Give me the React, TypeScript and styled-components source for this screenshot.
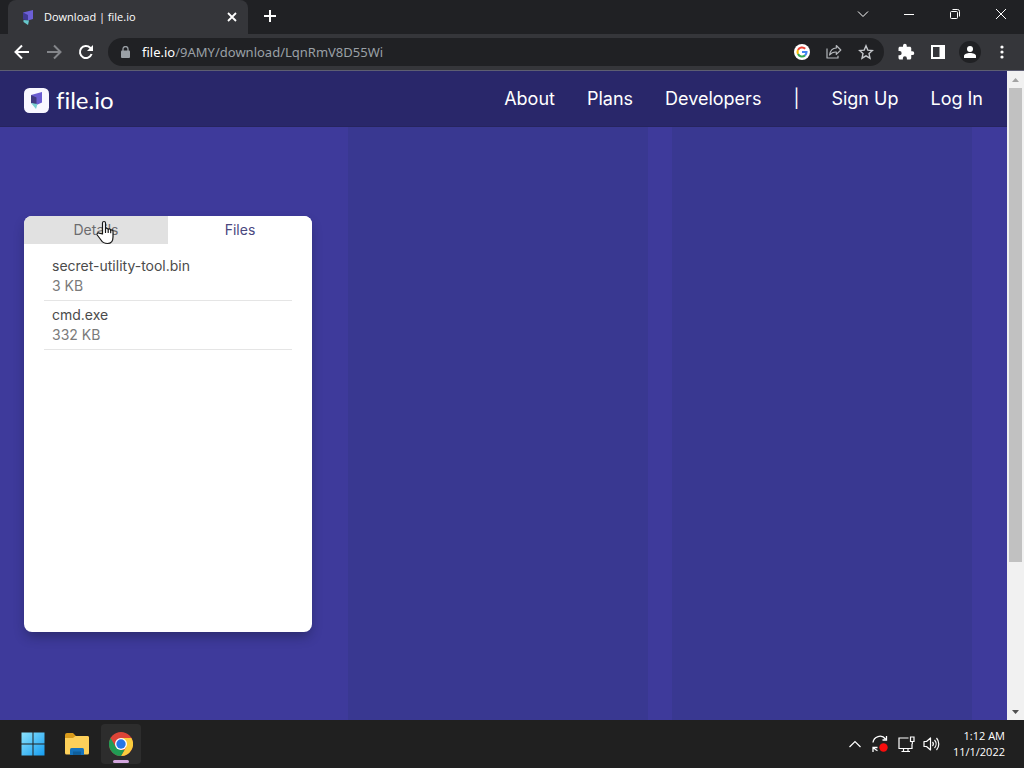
import React from "react";
import styled, { createGlobalStyle } from "styled-components";

const uiFont = '"Open Sans", "Noto Sans", sans-serif';
const siteFont = 'Inter, "Liberation Sans", sans-serif';

const GlobalStyle = createGlobalStyle`
  * { box-sizing: border-box; }
  body { margin: 0; background: #202124; }
  button, input { font: inherit; color: inherit; border: 0; padding: 0; margin: 0; background: none; outline: none; }
  svg { display: block; flex: none; }
`;

const Desktop = styled.div`
  display: flex;
  flex-direction: column;
  height: 100vh;
  overflow: hidden;
  font-family: ${uiFont};
`;

const TabStrip = styled.div`
  display: flex;
  flex: none;
  height: 34px;
  padding-left: 8px;
  background: #202124;
  color: #fff;
`;

const Tab = styled.div`
  display: flex;
  align-items: center;
  width: 240px;
  padding: 0 8px 0 12px;
  border-radius: 8px 8px 0 0;
  background: #35363a;
  font-size: 11px;
`;

const TabTitle = styled.span`
  flex: 1;
  padding: 0 0 2px 8px;
`;

const IconButton = styled.button<{ $w?: number; $h?: number }>`
  display: flex;
  flex: none;
  align-items: center;
  justify-content: center;
  width: ${(p) => p.$w ?? 32}px;
  height: ${(p) => p.$h ?? 32}px;
`;

const WindowControls = styled.div`
  display: flex;
  margin-left: auto;
  height: 30px;
`;

const Toolbar = styled.div`
  display: flex;
  flex: none;
  align-items: center;
  height: 37px;
  padding: 0 6px;
  background: #35363a;
  border-bottom: 1px solid #5d5e72;
  color: #fff;
`;

const AddressBar = styled.div`
  display: flex;
  flex: 1;
  align-items: center;
  height: 28px;
  margin: 0 6px;
  padding: 0 2px 0 13px;
  border-radius: 14px;
  background: #202124;
  font-family: "Noto Sans", sans-serif;
  font-size: 13px;
  line-height: 20px;
`;

const Url = styled.button`
  flex: 1;
  padding-left: 12px;
  text-align: left;
  color: #9aa0a6;
`;

const UrlHost = styled.span`
  color: #fff;
`;

const Avatar = styled.span`
  display: flex;
  align-items: center;
  justify-content: center;
  width: 22px;
  height: 22px;
  border-radius: 50%;
  background: #202124;
`;

const Viewport = styled.div`
  display: flex;
  flex: 1;
  min-height: 0;
`;

const Site = styled.div`
  display: flex;
  flex: 1;
  flex-direction: column;
  min-width: 0;
  overflow: hidden;
  background: #3e3a9b;
  font-family: ${siteFont};
`;

const SiteHeader = styled.header`
  display: flex;
  flex: none;
  align-items: center;
  justify-content: space-between;
  height: 56px;
  padding: 0 24px;
  background: #29276a;
  border-bottom: 1px solid #26245f;
`;

const Brand = styled.a`
  display: flex;
  align-items: center;
  gap: 7px;
  padding-top: 3px;
  color: #fff;
  font-family: Lato, sans-serif;
  font-size: 24px;
  font-variant-ligatures: none;
  line-height: 32px;
  text-decoration: none;
`;

const Nav = styled.nav`
  display: flex;
  gap: 32px;
  color: #fff;
  font-size: 18px;
  line-height: 28px;
`;

const NavLink = styled.a`
  color: inherit;
  text-decoration: none;
`;

const NavDivider = styled.span`
  width: 6px;
  text-align: center;
`;

const Columns = styled.main`
  display: grid;
  flex: 1;
  grid-template-columns: repeat(auto-fit, 300px);
  gap: 24px;
  padding-left: 24px;
`;

const Column = styled.section<{ $shaded?: boolean }>`
  background: ${(p) => (p.$shaded ? "#393891" : "transparent")};
`;

const Card = styled.article`
  position: relative;
  width: 288px;
  min-height: 416px;
  margin-top: 89px;
  border-radius: 8px;
  background: #fff;
  box-shadow: 0 6px 12px -2px rgba(20, 25, 50, 0.45);
  font-size: 14px;
  line-height: 20px;
`;

const CardTabs = styled.div`
  display: flex;
  border-radius: 8px 8px 0 0;
  overflow: hidden;
`;

const CardTab = styled.button<{ $active?: boolean }>`
  flex: 1;
  height: 28px;
  color: ${(p) => (p.$active ? "#4a4880" : "#6c6c6e")};
  background: ${(p) => (p.$active ? "#fff" : "#e1e1e1")};
`;

const FileList = styled.ul`
  margin: 0;
  padding: 8px 20px;
  list-style: none;
`;

const FileItem = styled.li`
  padding: 4px 8px;
  border-bottom: 1px solid #e5e5e5;
`;

const FileName = styled.div`
  color: #4b4b4b;
`;

const FileSize = styled.div`
  color: #7b7b7b;
`;

const Pointer = styled.svg`
  position: absolute;
  left: 72px;
  top: 4px;
`;

const ScrollBar = styled.div`
  display: flex;
  flex: none;
  flex-direction: column;
  align-items: center;
  width: 17px;
  background: #f1f1f1;
`;

const ScrollTrack = styled.div`
  flex: 1;
  width: 13px;
`;

const ScrollThumb = styled.div`
  height: 77%;
  background: #c1c1c1;
`;

const Taskbar = styled.footer`
  display: flex;
  flex: none;
  align-items: center;
  height: 48px;
  padding: 0 12px 0 13px;
  background: #202020;
  color: #fff;
`;

const TaskButton = styled.button<{ $active?: boolean }>`
  position: relative;
  display: flex;
  align-items: center;
  justify-content: center;
  width: 40px;
  height: 40px;
  margin-right: 4px;
  border-radius: 4px;
  background: ${(p) => (p.$active ? "#2d2d2d" : "transparent")};
`;

const ActiveMark = styled.span`
  position: absolute;
  bottom: 1px;
  left: 12px;
  width: 16px;
  height: 3px;
  border-radius: 2px;
  background: #d3a6de;
`;

const Tray = styled.div`
  display: flex;
  align-items: center;
  margin-left: auto;
`;

const Clock = styled.button`
  margin: 0 7px 0 10px;
  text-align: right;
  font-size: 11px;
  line-height: 16px;
`;

const Mark = ({ size = 16 }: { size?: number }) => (
  <svg width={size} height={size} viewBox="0 0 16 16">
    <path d="M3 3.500 13 1v9l-5 1.500z" fill="#6c5fd6" />
    <path d="m3 3.500 5 2.500v5.500L3 10.500z" fill="#403a94" />
    <path d="m3.500 11 5.500.5-1 4.500-4.500-3z" fill="#67c8cc" />
  </svg>
);

const Arrow = ({ flip, color = "#fff" }: { flip?: boolean; color?: string }) => (
  <svg width="16" height="16" viewBox="0 0 16 16" fill="none" stroke={color} strokeWidth="2">
    <path d={flip ? "M1 8h13M8 1.5 14.5 8 8 14.5" : "M15 8H2M8 1.5 1.5 8 8 14.5"} />
  </svg>
);

const Reload = () => (
  <svg width="16" height="16" viewBox="0 0 16 16" fill="none" stroke="#fff" strokeWidth="2">
    <path d="M13.6 10A6 6 0 1 1 12.2 3.8L14 5.6" />
    <path d="M15 1v6H9z" fill="#fff" stroke="none" />
  </svg>
);

const Lock = () => (
  <svg width="9" height="12" viewBox="0 0 9 12">
    <path d="M2 5V3a2.5 2.5 0 0 1 5 0v2" fill="none" stroke="#9aa0a6" strokeWidth="1.3" />
    <rect y="4.5" width="9" height="7.5" rx="1" fill="#9aa0a6" />
  </svg>
);

const Google = () => (
  <svg width="16" height="16" viewBox="0 0 16 16" fill="none" strokeWidth="2.1">
    <circle cx="8" cy="8" r="8" fill="#fff" />
    <path d="M11.2 4.8A4.5 4.5 0 0 0 4 6" stroke="#ea4335" />
    <path d="M4 6a4.5 4.5 0 0 0 0 4" stroke="#fbbc05" />
    <path d="M4 10a4.5 4.5 0 0 0 7 1.4" stroke="#34a853" />
    <path d="M11 11.4A4.5 4.5 0 0 0 12.5 8H8" stroke="#4285f4" />
  </svg>
);

const Share = () => (
  <svg width="16" height="16" viewBox="0 0 16 16" fill="none" stroke="#b4b7bb" strokeWidth="1.2" strokeLinejoin="round">
    <path d="M1 4.5V14h11v-2.2" />
    <path d="M10.3 1.5 14.8 6l-4.5 4.4V8C7.5 7.8 5.5 8.6 3.6 11c.5-4 3-6.8 6.7-7z" />
  </svg>
);

const Star = () => (
  <svg width="16" height="16" viewBox="0 0 16 16" fill="none" stroke="#c5c8cc" strokeWidth="1.4">
    <path d="m8 1.8 1.8 4.3 4.7.4L11 9.6l1 4.6-4-2.4-4 2.4 1-4.6-3.5-3.1 4.7-.4z" />
  </svg>
);

const Puzzle = () => (
  <svg width="18" height="18" viewBox="0 0 24 24" fill="#fff">
    <path d="M20.5 11H19V7c0-1.1-.9-2-2-2h-4V3.5a2.5 2.5 0 0 0-5 0V5H4c-1.1 0-2 .9-2 2v3.8h1.5a2.7 2.7 0 0 1 0 5.4H2V20c0 1.1.9 2 2 2h3.8v-1.500a2.7 2.7 0 0 1 5.400 0V22H17c1.1 0 2-.9 2-2v-4h1.500a2.500 2.500 0 0 0 0-5z" />
  </svg>
);

const SidePanel = () => (
  <svg width="14" height="14" viewBox="0 0 14 14">
    <path d="M1 1h12v12H1z" fill="none" stroke="#fff" strokeWidth="2" />
    <path d="M8.500 0H14v14H8.500z" fill="#fff" />
  </svg>
);

const Person = () => (
  <svg width="12" height="12" viewBox="0 0 12 12" fill="#fff">
    <circle cx="6" cy="3" r="3" />
    <path d="M0 12v-2c0-2 3-3 6-3s6 1 6 3v2z" />
  </svg>
);

const Dots = () => (
  <svg width="4" height="14" viewBox="0 0 4 14" fill="#fff">
    <circle cx="2" cy="2" r="1.600" />
    <circle cx="2" cy="7" r="1.600" />
    <circle cx="2" cy="12" r="1.600" />
  </svg>
);

const LineIcon = ({ d, size = 12, width = 1 }: { d: string; size?: number; width?: number }) => (
  <svg width={size} height={size} viewBox="0 0 12 12" fill="none" stroke="#fff" strokeWidth={width}>
    <path d={d} />
  </svg>
);

const LogoTile = () => (
  <svg width="25" height="25" viewBox="0 0 25 25">
    <rect width="25" height="25" rx="5.500" fill="#f8f7ff" />
    <path d="M7 7 18 4v10.500L12.500 17z" fill="#6a5cd0" />
    <path d="m7 7 5.500 2.500V17L7 15z" fill="#40397f" />
    <path d="m7 15 6.500 1-1.500 5z" fill="#79cfd0" />
  </svg>
);

const Windows = () => (
  <svg width="24" height="24" viewBox="0 0 24 24">
    <defs>
      <linearGradient id="win" x1="0" y1="0" x2="1" y2="1">
        <stop stopColor="#8be3fd" />
        <stop offset="1" stopColor="#159cf0" />
      </linearGradient>
    </defs>
    <path d="M.500.500h11v11H.500zM12.500.500h11v11h-11zM.500 12.500h11v11H.500zM12.500 12.500h11v11h-11z" fill="url(#win)" />
  </svg>
);

const Folder = () => (
  <svg width="24" height="22" viewBox="0 0 24 22">
    <path d="M0 2a2 2 0 0 1 2-2h6l3 3h11a2 2 0 0 1 2 2v6H0z" fill="#d99b1b" />
    <path d="M0 5h8l2.500-2H22.500A1.500 1.500 0 0 1 24 4.500v15.500a1.500 1.500 0 0 1-1.500 1.500h-21A1.500 1.500 0 0 1 0 20z" fill="#fdd05a" />
    <path d="M5 22v-5.500A1.500 1.500 0 0 1 6.500 15h11a1.500 1.500 0 0 1 1.500 1.500V22z" fill="#1673bd" />
    <path d="M8 18.500h8V22H8z" fill="#0f5f9c" />
  </svg>
);

const Chrome = () => (
  <svg width="24" height="24" viewBox="0 0 24 24">
    <circle cx="12" cy="12" r="12" fill="#dc4437" />
    <path d="M12 6h10.400A12 12 0 0 1 12 24l5.200-9z" fill="#fccd3d" />
    <path d="M1.600 6 6.800 15 12 18h3.500L12 24A12 12 0 0 1 1.600 6z" fill="#219b54" />
    <circle cx="12" cy="12" r="6" fill="#fff" />
    <circle cx="12" cy="12" r="4.700" fill="#2776e6" />
  </svg>
);

const Sync = () => (
  <svg width="18" height="18" viewBox="0 0 18 18" fill="none" stroke="#fff" strokeWidth="1.300">
    <path d="M2 7.500a7 7 0 0 1 12.500-3.500M15.500 1v4h-4M6.500 15.500A7 7 0 0 1 2.500 12.500M2 17v-4.500h4.500" />
    <circle cx="12.500" cy="12.500" r="4.200" fill="#f80d0d" stroke="none" />
  </svg>
);

const Network = () => (
  <svg width="17" height="17" viewBox="0 0 17 17" fill="none" stroke="#fff" strokeWidth="1.200">
    <path d="M10.500 2H1v10.500h13V8M5.500 12.500v3M10 12.500v3M3.500 15.500h8.500" />
    <path d="M12.500 1h3.500v4.500h-3.500zM14.300 5.500V8" />
  </svg>
);

const Speaker = () => (
  <svg width="17" height="16" viewBox="0 0 17 16" fill="none" stroke="#fff" strokeWidth="1.200" strokeLinejoin="round">
    <path d="M1 5.500h2.500L7.500 2v12l-4-3.500H1z" />
    <path d="M9.500 6a3 3 0 0 1 0 4M11.500 4a6 6 0 0 1 0 8M13.500 2a9 9 0 0 1 0 12" />
  </svg>
);

const Hand = () => (
  <Pointer width="20" height="25" viewBox="0 0 20 25" fill="#fff" stroke="#171717" strokeWidth="1.200" strokeLinejoin="round" strokeLinecap="round">
    <path d="M6.500 14V3a1.500 1.500 0 0 1 3 0v6c.3-1.200 2.600-1 2.700.5.4-1 2.400-.8 2.500.8.600-.9 2.300-.5 2.300 1V17c0 4-2 6.500-5.500 6.500S6.200 22 5 20l-3.800-5c-.8-1.300.7-2.500 2-1.800z" />
    <path d="M9.500 9v3.500M12.200 9.500v3M14.700 10.300v2.400" />
  </Pointer>
);

const files = [
  { name: "secret-utility-tool.bin", size: "3 KB" },
  { name: "cmd.exe", size: "332 KB" },
];

export default function App() {
  return (
    <Desktop>
      <GlobalStyle />
      <TabStrip>
        <Tab>
          <Mark />
          <TabTitle>Download | file.io</TabTitle>
          <IconButton $w={16} $h={16} aria-label="Close tab">
            <LineIcon d="M2 2l8 8M10 2l-8 8" width={1.8} />
          </IconButton>
        </Tab>
        <IconButton $w={44} aria-label="New tab">
          <LineIcon d="M6 0v12M0 6h12" width={2} />
        </IconButton>
        <WindowControls>
          <IconButton $w={46} $h={28} aria-label="Search tabs">
            <LineIcon d="M1 3.500 6 8.500l5-5" />
          </IconButton>
          <IconButton $w={46} $h={28} aria-label="Minimize">
            <LineIcon d="M1 6.500h10" />
          </IconButton>
          <IconButton $w={46} $h={28} aria-label="Restore">
            <LineIcon d="M2.500 3.500h5a1 1 0 0 1 1 1v5a1 1 0 0 1-1 1h-5a1 1 0 0 1-1-1v-5a1 1 0 0 1 1-1zM3.500 1.500h5a2 2 0 0 1 2 2v5" />
          </IconButton>
          <IconButton $w={46} $h={28} aria-label="Close">
            <LineIcon d="M1 1l10 10M11 1 1 11" />
          </IconButton>
        </WindowControls>
      </TabStrip>
      <Toolbar>
        <IconButton aria-label="Back"><Arrow /></IconButton>
        <IconButton aria-label="Forward"><Arrow flip color="#84868a" /></IconButton>
        <IconButton aria-label="Reload"><Reload /></IconButton>
        <AddressBar>
          <Lock />
          <Url aria-label="Address"><UrlHost>file.io</UrlHost>/9AMY/download/LqnRmV8D55Wi</Url>
          <IconButton aria-label="Google"><Google /></IconButton>
          <IconButton aria-label="Share"><Share /></IconButton>
          <IconButton aria-label="Bookmark"><Star /></IconButton>
        </AddressBar>
        <IconButton aria-label="Extensions"><Puzzle /></IconButton>
        <IconButton aria-label="Side panel"><SidePanel /></IconButton>
        <IconButton aria-label="Profile"><Avatar><Person /></Avatar></IconButton>
        <IconButton aria-label="Menu"><Dots /></IconButton>
      </Toolbar>
      <Viewport>
        <Site>
          <SiteHeader>
            <Brand href="#"><LogoTile />file.io</Brand>
            <Nav>
              <NavLink href="#about">About</NavLink>
              <NavLink href="#plans">Plans</NavLink>
              <NavLink href="#developers">Developers</NavLink>
              <NavDivider>|</NavDivider>
              <NavLink href="#signup">Sign Up</NavLink>
              <NavLink href="#login">Log In</NavLink>
            </Nav>
          </SiteHeader>
          <Columns>
            <Column>
              <Card>
                <CardTabs>
                  <CardTab>Details</CardTab>
                  <CardTab $active>Files</CardTab>
                </CardTabs>
                <FileList>
                  {files.map((f) => (
                    <FileItem key={f.name}>
                      <FileName>{f.name}</FileName>
                      <FileSize>{f.size}</FileSize>
                    </FileItem>
                  ))}
                </FileList>
                <Hand />
              </Card>
            </Column>
            <Column $shaded />
            <Column $shaded />
          </Columns>
        </Site>
        <ScrollBar>
          <IconButton $w={17} $h={17} aria-label="Scroll up">
            <svg width="7" height="4" viewBox="0 0 7 4"><path d="M0 4 3.500 0 7 4z" fill="#a3a3a3" /></svg>
          </IconButton>
          <ScrollTrack><ScrollThumb /></ScrollTrack>
          <IconButton $w={17} $h={17} aria-label="Scroll down">
            <svg width="7" height="4" viewBox="0 0 7 4"><path d="M0 0 3.500 4 7 0z" fill="#505050" /></svg>
          </IconButton>
        </ScrollBar>
      </Viewport>
      <Taskbar>
        <TaskButton aria-label="Start"><Windows /></TaskButton>
        <TaskButton aria-label="File Explorer"><Folder /></TaskButton>
        <TaskButton $active aria-label="Chrome"><Chrome /><ActiveMark /></TaskButton>
        <Tray>
          <IconButton $w={24} aria-label="Hidden icons"><LineIcon d="M.500 9 6 3.500 11.500 9" width={1.2} /></IconButton>
          <IconButton $w={26} aria-label="Updates"><Sync /></IconButton>
          <IconButton $w={28} aria-label="Network"><Network /></IconButton>
          <IconButton $w={22} aria-label="Volume"><Speaker /></IconButton>
          <Clock>1:12 AM<br />11/1/2022</Clock>
        </Tray>
      </Taskbar>
    </Desktop>
  );
}
